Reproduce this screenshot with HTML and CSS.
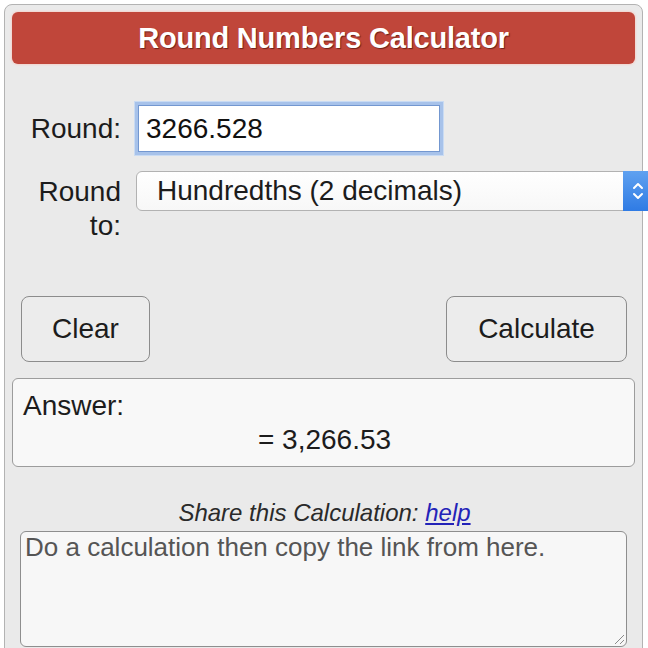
FILE: index.html
```html
<!DOCTYPE html>
<html>
<head>
<meta charset="utf-8">
<link rel="stylesheet" href="styles.css">
</head>
<body>
<div class="calc">
  <div class="title">Round Numbers Calculator</div>
  <div class="form">
    <label class="lbl lbl-round">Round:</label>
    <div class="input">3266.528</div>
    <label class="lbl lbl-to">Round to:</label>
    <div class="select">
      <span>Hundredths (2 decimals)</span>
      <span class="stepper">
        <svg width="14" height="24" viewBox="0 0 14 24"><path d="M3 9 L7 5 L11 9 M3 15 L7 19 L11 15" fill="none" stroke="#fff" stroke-width="2" stroke-linecap="round" stroke-linejoin="round"/></svg>
      </span>
    </div>
  </div>
  <div class="buttons">
    <div class="btn btn-clear">Clear</div>
    <div class="btn btn-calc">Calculate</div>
  </div>
  <div class="answer">
    <div class="answer-label">Answer:</div>
    <div class="answer-value">= 3,266.53</div>
  </div>
  <div class="share">Share this Calculation: <a href="#">help</a></div>
  <div class="link">Do a calculation then copy the link from here.
    <svg class="grip" width="12" height="12" viewBox="0 0 12 12"><path d="M11 2 L2 11 M11 7 L7 11" stroke="#8a8a8a" stroke-width="1" fill="none"/></svg>
  </div>
</div>
</body>
</html>
```
FILE: styles.css
```css
html, body {
  margin: 0;
  padding: 0;
  background: #fff;
  overflow: hidden;
  width: 648px;
  height: 648px;
}
body {
  font-family: "Liberation Sans", Arial, sans-serif;
  color: #1c1c1c;
}
.calc {
  margin: 4px 0 0 4px;
  width: 623px;
  height: 700px;
  border: 1px solid #b3b3b3;
  border-radius: 8px;
  background: #eaeaea;
  padding: 7px 7px 0 7px;
  box-sizing: content-box;
}
.title {
  height: 52px;
  background: #c0463a;
  border-radius: 6px;
  box-shadow: 0 0 2px 1px #f3d2cc;
  color: #fff;
  font-weight: bold;
  font-size: 29px;
  letter-spacing: -0.2px;
  line-height: 52px;
  text-align: center;
  text-shadow: 1px 1px 1px #6e2219;
}
.form {
  display: grid;
  grid-template-columns: 109px 1fr;
  column-gap: 14px;
  row-gap: 16px;
  margin-top: 38px;
  font-size: 28px;
}
.lbl {
  text-align: right;
}
.lbl-round {
  line-height: 53px;
}
.lbl-to {
  line-height: 34px;
  margin-top: 4px;
  width: 98px;
  justify-self: end;
}
.input {
  width: 308px;
  height: 53px;
  box-sizing: border-box;
  background: #fff;
  border: 3px solid #a7c2ea;
  box-shadow: inset 0 0 0 1px #7397d0, 0 0 0 1px #c9dbf3;
  padding-left: 8px;
  line-height: 47px;
  color: #111;
}
.select {
  width: 525px;
  height: 40px;
  box-sizing: border-box;
  margin-left: 1px;
  border: 1px solid #b2b2b2;
  border-radius: 6px 0 0 6px;
  background: linear-gradient(#ffffff, #f7f7f7);
  display: flex;
  align-items: center;
  padding-left: 20px;
  line-height: 38px;
  position: relative;
}
.stepper {
  position: absolute;
  left: 486px;
  top: -1px;
  width: 30px;
  height: 40px;
  background: linear-gradient(#5fa1f0, #2f7be4);
  display: flex;
  align-items: center;
  justify-content: center;
}
.buttons {
  display: flex;
  justify-content: space-between;
  margin-top: 53px;
  padding: 0 8px 0 9px;
}
.btn {
  height: 66px;
  box-sizing: border-box;
  border: 1px solid #8c8c8c;
  border-radius: 8px;
  background: #ececec;
  font-size: 28px;
  line-height: 64px;
  text-align: center;
}
.btn-clear {
  width: 129px;
}
.btn-calc {
  width: 181px;
}
.answer {
  margin-top: 16px;
  height: 89px;
  box-sizing: border-box;
  border: 1px solid #9c9c9c;
  border-radius: 6px;
  background: #f8f8f8;
  padding: 10px 10px 0 10px;
  font-size: 28px;
}
.answer-label {
  line-height: 34px;
}
.answer-value {
  text-align: center;
  line-height: 34px;
  margin-left: 2px;
}
.share {
  margin-top: 31px;
  text-align: center;
  font-style: italic;
  font-size: 24px;
  line-height: 30px;
  color: #2a2a2a;
  padding-left: 2px;
}
.share a {
  color: #2323b8;
  text-decoration: underline;
}
.link {
  margin: 3px 8px 0 8px;
  height: 116px;
  box-sizing: border-box;
  border: 1px solid #8e8e8e;
  border-radius: 6px;
  background: #f7f7f7;
  font-size: 26px;
  color: #555;
  padding: 0 4px;
  line-height: 30px;
  position: relative;
}
.grip {
  position: absolute;
  right: 1px;
  bottom: 1px;
}
```
